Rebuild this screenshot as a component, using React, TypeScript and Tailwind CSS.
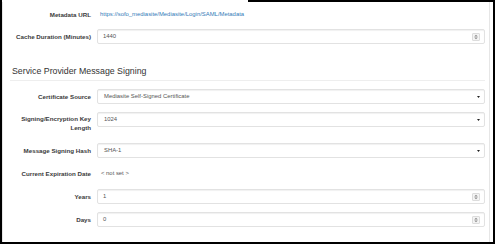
import React from 'react';

const Label = ({ children, className = '' }: any) => (
  <div
    className={`w-[88px] shrink-0 text-right text-[6.2px] font-bold leading-[9.4px] text-[#3a3a3a] ${className}`}
  >
    {children}
  </div>
);

const Spinner = () => (
  <div className="ml-auto flex h-[8px] w-[8px] items-center justify-center rounded-[1px] border border-[#dcdcdc] bg-[#f4f4f4]">
    <svg width="6" height="6" viewBox="0 0 6 6">
      <path d="M3 0.8 L4.8 2.5 L1.2 2.5 Z" fill="#8a8a8a" />
      <path d="M3 5.2 L4.8 3.5 L1.2 3.5 Z" fill="#8a8a8a" />
    </svg>
  </div>
);

const Caret = () => (
  <svg className="ml-auto mr-[1px]" width="3" height="2" viewBox="0 0 3 2">
    <path d="M0 0 L3 0 L1.5 2 Z" fill="#222" />
  </svg>
);

const Field = ({ value, kind }: { value: string; kind: 'number' | 'select' }) => (
  <div
    className={`ml-[6px] flex h-[15px] flex-1 items-center rounded-[2px] border border-[#e2e2e2] bg-white shadow-[inset_0_1px_1px_rgba(0,0,0,0.06)] ${
      kind === 'number' ? 'pl-[5px] pr-[4px]' : 'pl-[6px] pr-[3px]'
    } text-[5.9px] text-[#555]`}
  >
    <span>{value}</span>
    {kind === 'number' ? <Spinner /> : <Caret />}
  </div>
);

export default function App() {
  return (
    <div className="flex h-[244px] w-[495px] flex-col border-x-2 border-b-2 border-black bg-white font-['Liberation_Sans',Arial,sans-serif]">
      {/* top edge of the frame */}
      <div className="flex h-[2px] shrink-0">
        <div className="w-[246px]" />
        <div className="flex-1 bg-black" />
      </div>

      <div className="mr-[3px] flex-1 border-x border-[#e6e6e6] pt-[5px]">
        {/* Metadata URL */}
        <div className="flex h-[15px] items-center pr-[4px]">
          <Label>Metadata URL</Label>
          <span className="ml-[9px] text-[5.9px] text-[#337ab7]">
            https://sofo_mediasite/Mediasite/Login/SAML/Metadata
          </span>
        </div>

        {/* Cache Duration */}
        <div className="mt-[7px] flex items-center pr-[4px]">
          <Label>Cache Duration (Minutes)</Label>
          <Field value="1440" kind="number" />
        </div>

        <h3 className="ml-[9px] mt-[21px] text-[8.8px] leading-[12px] text-[#333]">
          Service Provider Message Signing
        </h3>
        <div className="ml-[7px] mr-[4px] mt-[3px] h-px bg-[#eee]" />

        {/* Certificate Source */}
        <div className="mt-[8px] flex items-center pr-[4px]">
          <Label>Certificate Source</Label>
          <Field value="Mediasite Self-Signed Certificate" kind="select" />
        </div>

        {/* Key Length */}
        <div className="mt-[8px] flex h-[31px] items-start pr-[4px]">
          <Label className="pt-[1.6px]">
            Signing/Encryption Key
            <br />
            Length
          </Label>
          <Field value="1024" kind="select" />
        </div>

        {/* Hash */}
        <div className="flex items-center pr-[4px]">
          <Label>Message Signing Hash</Label>
          <Field value="SHA-1" kind="select" />
        </div>

        {/* Expiration */}
        <div className="mt-[8px] flex h-[15px] items-center pr-[4px]">
          <Label>Current Expiration Date</Label>
          <span className="ml-[10px] text-[5.9px] text-[#555]">&lt; not set &gt;</span>
        </div>

        <div className="mt-[8px] flex items-center pr-[4px]">
          <Label>Years</Label>
          <Field value="1" kind="number" />
        </div>

        <div className="mt-[8px] flex items-center pr-[4px]">
          <Label>Days</Label>
          <Field value="0" kind="number" />
        </div>
      </div>
    </div>
  );
}
